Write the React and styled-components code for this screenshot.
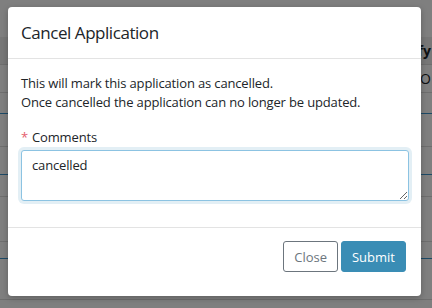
import React from "react";
import styled, { createGlobalStyle } from "styled-components";

const Global = createGlobalStyle`
  html, body { margin: 0; padding: 0; }
  body {
    width: 432px;
    height: 308px;
    overflow: hidden;
    background: #fff;
    font-family: "Open Sans", "Noto Sans", sans-serif;
    color: #212529;
  }
`;

const Page = styled.div`
  position: relative;
  width: 432px;
  height: 308px;
  overflow: hidden;
  padding-top: 37px;
  box-sizing: border-box;
`;

const Row = styled.div`
  display: flex;
  justify-content: flex-end;
  align-items: center;
  height: ${(p) => p.h}px;
  padding-right: 1px;
  background: ${(p) => (p.head ? "#eeeeee" : "#fff")};
  border-bottom: 1px solid ${(p) => (p.blue ? "#3b94cc" : "#dcdcdc")};
  box-sizing: border-box;
  font-size: 14px;
  font-weight: ${(p) => (p.head ? 700 : 400)};
  white-space: nowrap;
`;

const Overlay = styled.div`
  position: absolute;
  inset: 0;
  background: rgba(0, 0, 0, 0.5);
`;

const Dialog = styled.div`
  position: absolute;
  left: 8px;
  top: 7px;
  width: 413px;
  height: 289px;
  background: #fff;
  border-radius: 4px;
  box-shadow: 0 2px 6px rgba(0, 0, 0, 0.25);
  display: flex;
  flex-direction: column;
  box-sizing: border-box;
`;

const Header = styled.div`
  height: 52px;
  padding: 0 13px;
  display: flex;
  align-items: center;
  border-bottom: 1px solid #e3e3e3;
  box-sizing: border-box;
`;

const Title = styled.h4`
  margin: 0;
  font-size: 17px;
  letter-spacing: -0.45px;
  font-weight: 400;
  color: #212529;
  line-height: 22px;
`;

const Body = styled.div`
  padding: 15px 13px 0;
  height: 169px;
  box-sizing: border-box;
  border-bottom: 1px solid #e3e3e3;
  font-size: 13px;
  letter-spacing: -0.15px;
  line-height: 19px;
`;

const Para = styled.p`
  margin: 0 0 16px;
`;

const Label = styled.label`
  display: block;
  margin-bottom: 3px;
  &::before {
    content: "*";
    color: #e4606d;
    margin-right: 4px;
  }
`;

const Area = styled.textarea`
  display: block;
  width: 388px;
  height: 51px;
  box-sizing: border-box;
  margin: 0;
  padding: 5px 10px;
  border: 1px solid #8cc3e2;
  border-radius: 3px;
  box-shadow: 0 0 0 3px rgba(58, 141, 181, 0.14);
  font-family: inherit;
  font-size: 13px;
  letter-spacing: -0.15px;
  line-height: 19px;
  color: #212529;
  outline: none;
  resize: vertical;
`;

const Footer = styled.div`
  display: flex;
  justify-content: flex-end;
  gap: 3px;
  padding: 13px 15px 0;
`;

const Button = styled.button`
  height: 31px;
  padding: 0 ${(p) => (p.primary ? 10 : 10)}px;
  border-radius: 3px;
  font-family: inherit;
  font-size: 13px;
  border: 1px solid ${(p) => (p.primary ? "#3a8db5" : "#6c757d")};
  background: ${(p) => (p.primary ? "#3a8db5" : "#fff")};
  color: ${(p) => (p.primary ? "#fff" : "#6c757d")};
  cursor: pointer;
`;

export default function App() {
  return (
    <>
      <Global />
      <Page>
        <Row h={28} head>
          ify
        </Row>
        <Row h={28}>O</Row>
        <Row h={21} blue />
        <Row h={33} />
        <Row h={28} blue />
        <Row h={22} />
        <Row h={45} />
        <Row h={17} blue />
        <Row h={41} />
        <Overlay />
        <Dialog>
          <Header>
            <Title>Cancel Application</Title>
          </Header>
          <Body>
            <Para>
              This will mark this application as cancelled.
              <br />
              Once cancelled the application can no longer be updated.
            </Para>
            <Label>Comments</Label>
            <Area defaultValue="cancelled" />
          </Body>
          <Footer>
            <Button>Close</Button>
            <Button primary>Submit</Button>
          </Footer>
        </Dialog>
      </Page>
    </>
  );
}
